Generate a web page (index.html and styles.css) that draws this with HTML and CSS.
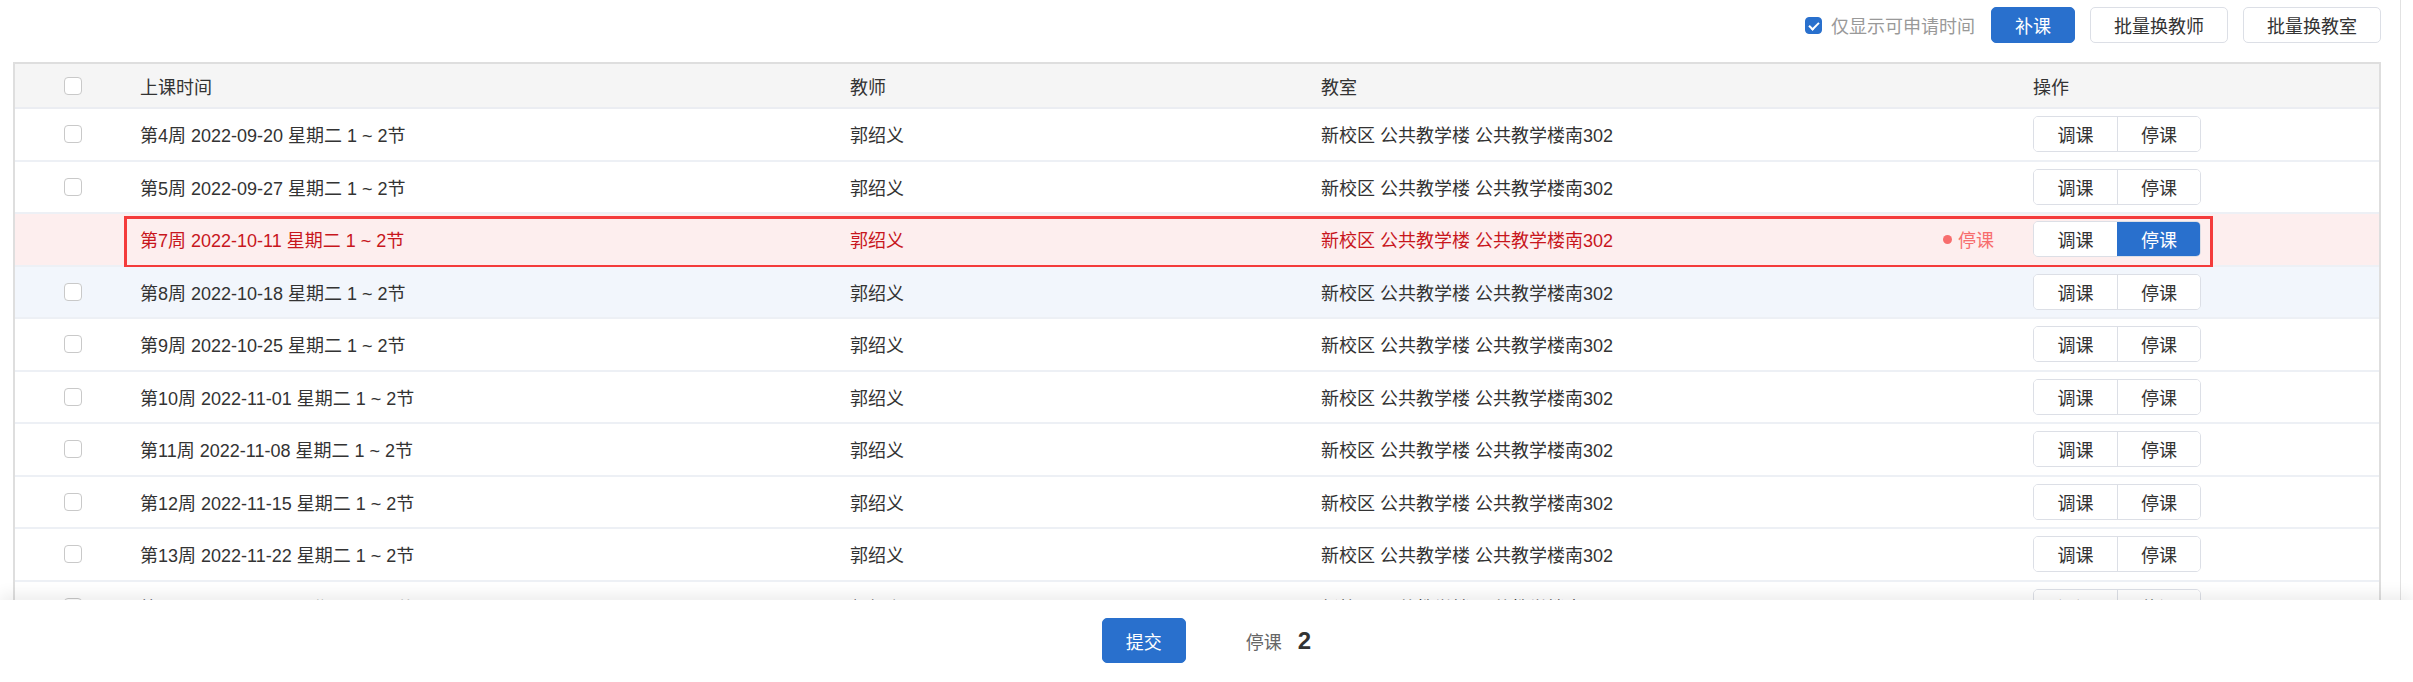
FILE: index.html
```html
<!DOCTYPE html>
<html lang="zh-CN">
<head>
    <meta charset="UTF-8">
    <meta name="viewport" content="width=device-width, initial-scale=1.0">
    <title>停课申请</title>
    <link rel="stylesheet" href="styles.css">
</head>
<body>
    <div class="main">
        <div class="toolbar">
            <label class="only-available">
                <span class="check checked"></span>
                仅显示可申请时间
            </label>
            <button class="btn btn-primary">补课</button>
            <button class="btn">批量换教师</button>
            <button class="btn">批量换教室</button>
        </div>

        <div class="table">
            <div class="row head">
                <div class="cell cell-check"><span class="check"></span></div>
                <div class="cell">上课时间</div>
                <div class="cell">教师</div>
                <div class="cell">教室</div>
                <div class="cell">操作</div>
            </div>

            <div class="row">
                <div class="cell cell-check"><span class="check"></span></div>
                <div class="cell">第4周 2022-09-20 星期二 1 ~ 2节</div>
                <div class="cell">郭绍义</div>
                <div class="cell">新校区 公共教学楼 公共教学楼南302</div>
                <div class="cell"><div class="btn-group"><button>调课</button><button>停课</button></div></div>
            </div>
            <div class="row">
                <div class="cell cell-check"><span class="check"></span></div>
                <div class="cell">第5周 2022-09-27 星期二 1 ~ 2节</div>
                <div class="cell">郭绍义</div>
                <div class="cell">新校区 公共教学楼 公共教学楼南302</div>
                <div class="cell"><div class="btn-group"><button>调课</button><button>停课</button></div></div>
            </div>
            <div class="row stopped">
                <div class="cell cell-check"></div>
                <div class="cell">第7周 2022-10-11 星期二 1 ~ 2节</div>
                <div class="cell">郭绍义</div>
                <div class="cell cell-room">
                    新校区 公共教学楼 公共教学楼南302
                    <span class="status">停课</span>
                </div>
                <div class="cell"><div class="btn-group"><button>调课</button><button class="on">停课</button></div></div>
                <div class="mark"></div>
            </div>
            <div class="row hover">
                <div class="cell cell-check"><span class="check"></span></div>
                <div class="cell">第8周 2022-10-18 星期二 1 ~ 2节</div>
                <div class="cell">郭绍义</div>
                <div class="cell">新校区 公共教学楼 公共教学楼南302</div>
                <div class="cell"><div class="btn-group"><button>调课</button><button>停课</button></div></div>
            </div>
            <div class="row">
                <div class="cell cell-check"><span class="check"></span></div>
                <div class="cell">第9周 2022-10-25 星期二 1 ~ 2节</div>
                <div class="cell">郭绍义</div>
                <div class="cell">新校区 公共教学楼 公共教学楼南302</div>
                <div class="cell"><div class="btn-group"><button>调课</button><button>停课</button></div></div>
            </div>
            <div class="row">
                <div class="cell cell-check"><span class="check"></span></div>
                <div class="cell">第10周 2022-11-01 星期二 1 ~ 2节</div>
                <div class="cell">郭绍义</div>
                <div class="cell">新校区 公共教学楼 公共教学楼南302</div>
                <div class="cell"><div class="btn-group"><button>调课</button><button>停课</button></div></div>
            </div>
            <div class="row">
                <div class="cell cell-check"><span class="check"></span></div>
                <div class="cell">第11周 2022-11-08 星期二 1 ~ 2节</div>
                <div class="cell">郭绍义</div>
                <div class="cell">新校区 公共教学楼 公共教学楼南302</div>
                <div class="cell"><div class="btn-group"><button>调课</button><button>停课</button></div></div>
            </div>
            <div class="row">
                <div class="cell cell-check"><span class="check"></span></div>
                <div class="cell">第12周 2022-11-15 星期二 1 ~ 2节</div>
                <div class="cell">郭绍义</div>
                <div class="cell">新校区 公共教学楼 公共教学楼南302</div>
                <div class="cell"><div class="btn-group"><button>调课</button><button>停课</button></div></div>
            </div>
            <div class="row">
                <div class="cell cell-check"><span class="check"></span></div>
                <div class="cell">第13周 2022-11-22 星期二 1 ~ 2节</div>
                <div class="cell">郭绍义</div>
                <div class="cell">新校区 公共教学楼 公共教学楼南302</div>
                <div class="cell"><div class="btn-group"><button>调课</button><button>停课</button></div></div>
            </div>
            <div class="row">
                <div class="cell cell-check"><span class="check"></span></div>
                <div class="cell">第14周 2022-11-29 星期二 1 ~ 2节</div>
                <div class="cell">郭绍义</div>
                <div class="cell">新校区 公共教学楼 公共教学楼南302</div>
                <div class="cell"><div class="btn-group"><button>调课</button><button>停课</button></div></div>
            </div>
        </div>
    </div>

    <div class="footer">
        <button class="btn btn-primary btn-submit">提交</button>
        <span class="summary">停课</span>
        <span class="count">2</span>
    </div>
</body>
</html>
```

FILE: styles.css
```css
* {
    margin: 0;
    padding: 0;
    box-sizing: border-box;
}

body {
    font-family: 'Liberation Sans', 'Noto Sans CJK SC', sans-serif;
    font-size: 18px;
    color: #333;
    background: white;
    height: 682px;
    overflow: hidden;
}

button {
    font-family: inherit;
    font-size: inherit;
    cursor: pointer;
}

.main {
    width: 2401px;
    height: 600px;
    overflow: hidden;
    border-right: 1px solid #e2e2e2;
    padding: 0 19px 0 13px;
}

/* top bar */
.toolbar {
    height: 62px;
    padding-top: 7px;
    display: flex;
    justify-content: flex-end;
    align-items: flex-start;
    gap: 15px;
}

.only-available {
    height: 36px;
    display: flex;
    align-items: center;
    gap: 9px;
    color: #999;
    margin-right: 1px;
}

.btn {
    height: 36px;
    padding: 0 23px;
    background: white;
    color: #333;
    border: 1px solid #dcdfe6;
    border-radius: 5px;
}

.btn-primary {
    background: #2970cd;
    border-color: #2970cd;
    color: white;
}

.check {
    display: inline-block;
    width: 18px;
    height: 18px;
    border: 1px solid #c9c9c9;
    border-radius: 4px;
    background: white;
    position: relative;
}

.check.checked {
    width: 17px;
    height: 17px;
    background: #2970cd;
    border-color: #2970cd;
}

.check.checked::after {
    content: "";
    position: absolute;
    left: 5px;
    top: 2px;
    width: 4px;
    height: 8px;
    border: solid white;
    border-width: 0 2px 2px 0;
    transform: rotate(45deg);
}

/* table */
.table {
    border: 2px solid #dedede;
    border-bottom: none;
}

.row {
    display: grid;
    grid-template-columns: 116px 710px 471px 712px 1fr;
    height: 52.5px;
    border-bottom: 2px solid #edf0f5;
    position: relative;
}

.row.head {
    height: 45px;
    background: #f5f5f5;
    border-bottom-color: #ebedf2;
}

.cell {
    display: flex;
    align-items: center;
    padding-left: 9px;
    white-space: nowrap;
}

.cell-check {
    justify-content: center;
    padding-left: 0;
}

.row.stopped {
    background: #fdeeee;
    color: #c8161d;
}

.row.hover {
    background: #f2f6fc;
}

.cell-room {
    justify-content: space-between;
    padding-right: 30px;
}

.status {
    color: #f76d6d;
    display: flex;
    align-items: center;
    gap: 6px;
}

.status::before {
    content: "";
    width: 9px;
    height: 9px;
    border-radius: 50%;
    background: #f76d6d;
}

.mark {
    position: absolute;
    left: 109px;
    top: 2px;
    width: 2089px;
    height: 52px;
    border: 3px solid #f43b3b;
    pointer-events: none;
}

.btn-group {
    display: flex;
    height: 36px;
    border: 1px solid #dcdfe6;
    border-radius: 5px;
    overflow: hidden;
}

.btn-group button {
    width: 83px;
    border: none;
    background: white;
    color: #333;
}

.btn-group button + button {
    border-left: 1px solid #dcdfe6;
}

.btn-group button.on {
    background: #2970cd;
    color: white;
    border-left-color: #2970cd;
}

/* bottom bar */
.footer {
    position: relative;
    z-index: 1;
    height: 82px;
    background: white;
    box-shadow: 0 -6px 14px rgba(0, 0, 0, 0.07);
    display: flex;
    justify-content: center;
    align-items: center;
    padding-bottom: 1px;
}

.btn-submit {
    height: 45px;
    width: 84px;
    padding: 0;
    margin-right: 60px;
}

.summary {
    color: #666;
    margin-right: 16px;
}

.count {
    font-size: 24px;
    font-weight: bold;
    color: #333;
}
```
